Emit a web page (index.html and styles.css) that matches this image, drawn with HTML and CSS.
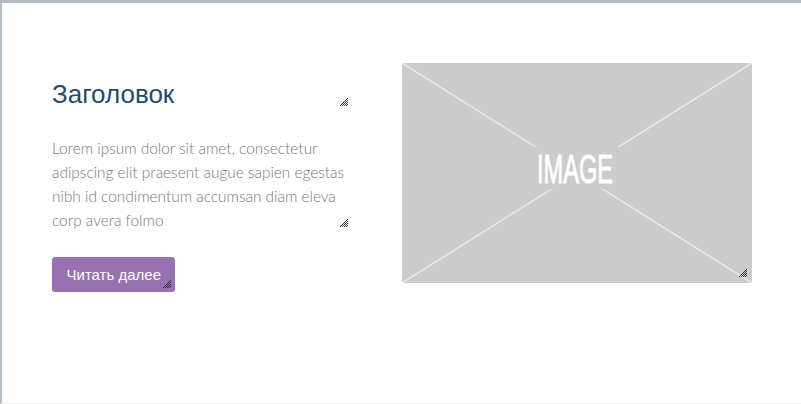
FILE: index.html
```html
<!DOCTYPE html>
<html lang="ru">
<head>
<meta charset="utf-8">
<title>Блок</title>
<link rel="stylesheet" href="styles.css">
</head>
<body>
<div class="frame">
  <section class="block">
    <div class="text-col">
      <div class="editable heading-box">
        <h2 class="heading">Заголовок</h2>
        <svg class="grip grip-head" width="8" height="8" viewBox="0 0 8 8"><path d="M8 0L0 8M8 2L2 8M8 4L4 8M8 6L6 8" stroke="#222" stroke-width="0.9" fill="none"/></svg>
      </div>
      <div class="editable para-box">
        <p class="para">Lorem ipsum dolor sit amet, consectetur adipscing elit praesent augue sapien egestas nibh id condimentum accumsan diam eleva corp avera folmo</p>
        <svg class="grip grip-para" width="8" height="8" viewBox="0 0 8 8"><path d="M8 0L0 8M8 2L2 8M8 4L4 8M8 6L6 8" stroke="#222" stroke-width="0.9" fill="none"/></svg>
      </div>
      <div class="btn-row">
        <a class="btn" href="#">Читать далее
          <svg class="grip grip-btn" width="8" height="8" viewBox="0 0 8 8"><path d="M8 0L0 8M8 2L2 8M8 4L4 8M8 6L6 8" stroke="#222" stroke-width="0.9" fill="none"/></svg>
        </a>
      </div>
    </div>
    <div class="image-col">
      <svg class="placeholder" width="350" height="220" viewBox="0 0 350 220">
        <rect width="350" height="220" fill="#cccccc"/>
        <line x1="0" y1="0" x2="350" y2="220" stroke="#eeeeee" stroke-width="1.2"/>
        <line x1="350" y1="0" x2="0" y2="220" stroke="#eeeeee" stroke-width="1.2"/>
        <rect x="133" y="84" width="85" height="42" fill="#cccccc"/>
        <text x="135" y="120" textLength="76" lengthAdjust="spacingAndGlyphs" fill="#ffffff" stroke="#ffffff" stroke-width="0.9" font-family="Liberation Sans, Arial, sans-serif" font-size="41">IMAGE</text>
      </svg>
      <svg class="grip grip-img" width="8" height="8" viewBox="0 0 8 8"><path d="M8 0L0 8M8 2L2 8M8 4L4 8M8 6L6 8" stroke="#222" stroke-width="0.9" fill="none"/></svg>
    </div>
  </section>
</div>
</body>
</html>
```

FILE: styles.css
```css
html, body {
  margin: 0;
  padding: 0;
  background: #ffffff;
}

.frame {
  box-sizing: border-box;
  width: 801px;
  height: 404px;
  border-top: 3px solid #b3bdc8;
  border-left: 2px solid #b3bdc8;
  border-bottom: 1px solid #eeeeee;
  background: #ffffff;
}

.block {
  display: flex;
  gap: 52px;
  padding: 60px 0 0 50px;
}

.text-col {
  width: 298px;
  padding-top: 15px;
  display: flex;
  flex-direction: column;
}

.editable {
  position: relative;
}

.grip {
  position: absolute;
  right: 2px;
  bottom: 2px;
  display: block;
}

.grip-head {
  bottom: 6px;
}

.grip-para {
  bottom: 6px;
}

.heading {
  margin: 0;
  padding-bottom: 2px;
  font-family: "Liberation Sans", Arial, sans-serif;
  font-weight: normal;
  font-size: 26px;
  line-height: 32px;
  color: #1e4d6b;
}

.para-box {
  margin-top: 24px;
}

.para {
  margin: 0;
  font-family: Lato, "Open Sans", sans-serif;
  font-weight: 300;
  font-size: 15.4px;
  line-height: 24px;
  color: #777777;
  padding-bottom: 1px;
}

.btn-row {
  display: flex;
  margin-top: 24px;
}

.btn {
  position: relative;
  display: inline-block;
  height: 35px;
  line-height: 35px;
  padding: 0 14.5px;
  border-radius: 3px;
  background: #9872b0;
  color: #ffffff;
  text-decoration: none;
  font-family: "Liberation Sans", Arial, sans-serif;
  font-size: 15px;
}

.grip-btn {
  right: 4px;
  bottom: 4px;
}

.image-col {
  position: relative;
  width: 350px;
  height: 220px;
}

.placeholder {
  display: block;
}

.grip-img {
  right: 5px;
  bottom: 6px;
}
```
